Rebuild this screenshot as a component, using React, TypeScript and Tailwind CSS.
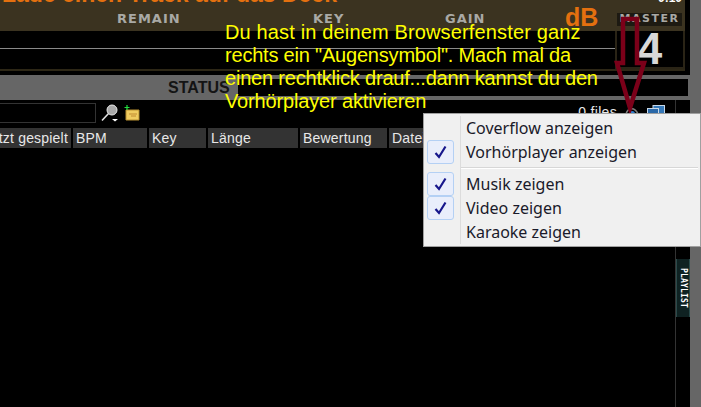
const columns = [
  { label: "Zuletzt gespielt", width: "w-[71px]", align: "justify-end" },
  { label: "BPM", width: "w-[74px]", align: "" },
  { label: "Key", width: "w-[57px]", align: "" },
  { label: "Länge", width: "w-[90px]", align: "" },
  { label: "Bewertung", width: "w-[87px]", align: "" },
  { label: "Datei", width: "w-[60px]", align: "" },
];

const menuTop = [
  { label: "Coverflow anzeigen", checked: false },
  { label: "Vorhörplayer anzeigen", checked: true },
];

const menuBottom = [
  { label: "Musik zeigen", checked: true },
  { label: "Video zeigen", checked: true },
  { label: "Karaoke zeigen", checked: false },
];

function MenuItem({ label, checked }: { label: string; checked: boolean }) {
  return (
    <div className="flex h-[24px] items-center">
      <div className="flex w-[36px] justify-start pl-[3px]">
        {checked && (
          <div className="flex h-[24px] w-[27px] items-center justify-center rounded-[3px] border border-[#b4d0f4] bg-[#e9eefb]">
            <svg width="13" height="14" viewBox="0 0 13 14" fill="none">
              <path d="M1.5 8 L5 12 L11.5 1.5" stroke="#17178c" strokeWidth="2.2" />
            </svg>
          </div>
        )}
      </div>
      <span className="pl-[6px] text-[#1a1a2a]">{label}</span>
    </div>
  );
}

export default function App() {
  return (
    <div className="relative flex h-[407px] w-[701px] overflow-hidden bg-black font-['Liberation_Sans',sans-serif]">
      <div className="flex w-[690px] flex-col">
        {/* deck */}
        <div className="flex h-[31px] w-[685px] flex-col overflow-hidden bg-[#3b3320]">
          <div className="flex h-[6px] items-end justify-between">
            <span className="whitespace-nowrap pl-[2px] text-[23px] font-bold leading-[24px] text-[#e4700f]">
              Lade einen Track auf das Deck
            </span>
            <span className="mb-[2px] pr-[3px] text-[12px] font-bold leading-[12px] text-white">0:10</span>
          </div>
          <div className="mt-[6px] flex h-[14px] items-center font-['DejaVu_Sans',sans-serif] text-[13px] font-bold tracking-[1px] text-[#a9a9a5]">
            <span className="ml-[117px] w-[196px]">REMAIN</span>
            <span className="w-[132px]">KEY</span>
            <span className="w-[120px]">GAIN</span>
            <span className="-mt-[3px] w-[52px] font-['Liberation_Sans',sans-serif] text-[25px] font-bold tracking-normal text-[#e4700f]">
              dB
            </span>
            <span className="flex h-[13px] w-[65px] items-center justify-center bg-[#1d1a12] text-[11px] tracking-[1.5px]">
              MASTER
            </span>
          </div>
        </div>
        <div className="flex h-[38px] w-[685px]">
          <div className="flex-1 pt-[17px]">
            <div className="h-px bg-[#8a8a8a]" />
          </div>
          <div className="flex w-[70px] items-center justify-center border-x-2 border-b-2 border-[#2a2416] text-[44px] font-bold leading-none text-[#d8d8d8]">
            4
          </div>
        </div>
        <div className="h-[2px] w-[685px] bg-[#2d2716]" />
        {/* status */}
        <div className="mt-[4px] flex h-[25px] items-center bg-[#666666]">
          <div className="w-[238px] pl-[168px] text-[16px] font-bold text-[#141414]">STATUS</div>
          <div className="mr-[2px] h-[17px] flex-1 bg-black" />
        </div>
        {/* list */}
        <div className="flex flex-1">
          <div className="flex w-[676px] flex-col">
            <div className="flex h-[28px] pt-[3px]">
              <div className="h-[20px] w-[96px] border border-l-0 border-[#333333]" />
              <div className="ml-[5px] flex h-[20px] items-center gap-[3px]">
                <svg width="20" height="19" viewBox="0 0 20 19" fill="none">
                  <circle cx="11" cy="6" r="5" fill="#a8a8a8" stroke="#e8e8e8" />
                  <path d="M7.5 9.5 L1 16.5" stroke="#e0e0e0" strokeWidth="1.6" />
                  <path d="M11 15 H17 L14 17.5 Z" fill="#ffffff" />
                </svg>
                <svg width="16" height="16" viewBox="0 0 16 16" fill="none">
                  <path d="M2 5 H15 V15 H2 Z" fill="#f0cc60" stroke="#b89030" />
                  <path d="M5 9 H13 M7 11 H12" stroke="#c08a30" />
                  <path d="M3 0 V5 M0.5 2.5 H5.5" stroke="#22e040" strokeWidth="1.2" />
                </svg>
              </div>
              <div className="ml-auto flex items-start gap-[8px] pr-[10px] pt-[2px]">
                <span className="text-[14px] leading-[15px] tracking-[0.3px] text-[#e8e8e8]">0 files</span>
                <svg width="14" height="10" viewBox="0 0 14 10" fill="none">
                  <path d="M1 9 C3 2 10 2 13 9" stroke="#808080" strokeWidth="1.5" />
                  <circle cx="7" cy="9" r="3" fill="#2f80d0" />
                </svg>
                <svg width="18" height="10" viewBox="0 0 18 10" fill="none">
                  <rect x="6" y="0.5" width="11.5" height="9" fill="#3578b8" stroke="#c8d8e8" />
                  <rect x="0.5" y="3.5" width="11" height="6.5" fill="#2a68a8" stroke="#c8d8e8" />
                </svg>
              </div>
            </div>
            <div className="flex h-[20px] gap-[2px] overflow-hidden text-[14px] tracking-[0.2px] text-[#e8e8e8]">
              {columns.map((column) => (
                <div
                  key={column.label}
                  className={`flex shrink-0 items-center overflow-hidden whitespace-nowrap bg-[#333333] px-[3px] ${column.width} ${column.align}`}
                >
                  {column.label}
                </div>
              ))}
            </div>
          </div>
          <div className="flex-1 border-l border-[#333333] pt-[159px]">
            <div className="flex h-[58px] items-center justify-center border-y border-[#2a4a4a] bg-[#0f2222] font-['DejaVu_Sans_Mono',monospace] text-[8px] font-bold tracking-[0.2px] text-white [writing-mode:vertical-rl]">
              PLAYLIST
            </div>
          </div>
        </div>
      </div>
      <div className="w-[11px] bg-[#666666]" />

      {/* yellow note pasted on top */}
      <div className="absolute left-[225px] top-[21px] whitespace-nowrap text-[20px] leading-[23px] text-[#ffff00]">
        <div className="tracking-[0.15px]">Du hast in deinem Browserfenster ganz</div>
        <div className="tracking-[-0.2px]">rechts ein "Augensymbol". Mach mal da</div>
        <div className="tracking-[-0.2px]">einen rechtklick drauf...dann kannst du den</div>
        <div className="tracking-[-0.15px]">Vorhörplayer aktivieren</div>
      </div>

      {/* arrow */}
      <svg className="absolute left-[610px] top-[12px]" width="44" height="102" viewBox="0 0 44 102" fill="none">
        <path d="M13 7 H27 V51 H34 L20 96 L7 51 H13 Z" stroke="#7b0019" strokeWidth="4.5" />
      </svg>

      {/* context menu */}
      <div className="absolute left-[423px] top-[113px] h-[134px] w-[278px] border border-[#a0a0a0] bg-[#f0f0f0] py-[2px] font-['Noto_Sans',sans-serif] text-[16px]">
        <div className="absolute bottom-[2px] left-[36px] top-[2px] w-px bg-[#dcdcdc]" />
        {menuTop.map((item) => (
          <MenuItem key={item.label} label={item.label} checked={item.checked} />
        ))}
        <div className="my-[3px] ml-[37px] mr-[2px] h-[2px] border-b border-white bg-[#d7d7d7]" />
        {menuBottom.map((item) => (
          <MenuItem key={item.label} label={item.label} checked={item.checked} />
        ))}
      </div>
    </div>
  );
}
